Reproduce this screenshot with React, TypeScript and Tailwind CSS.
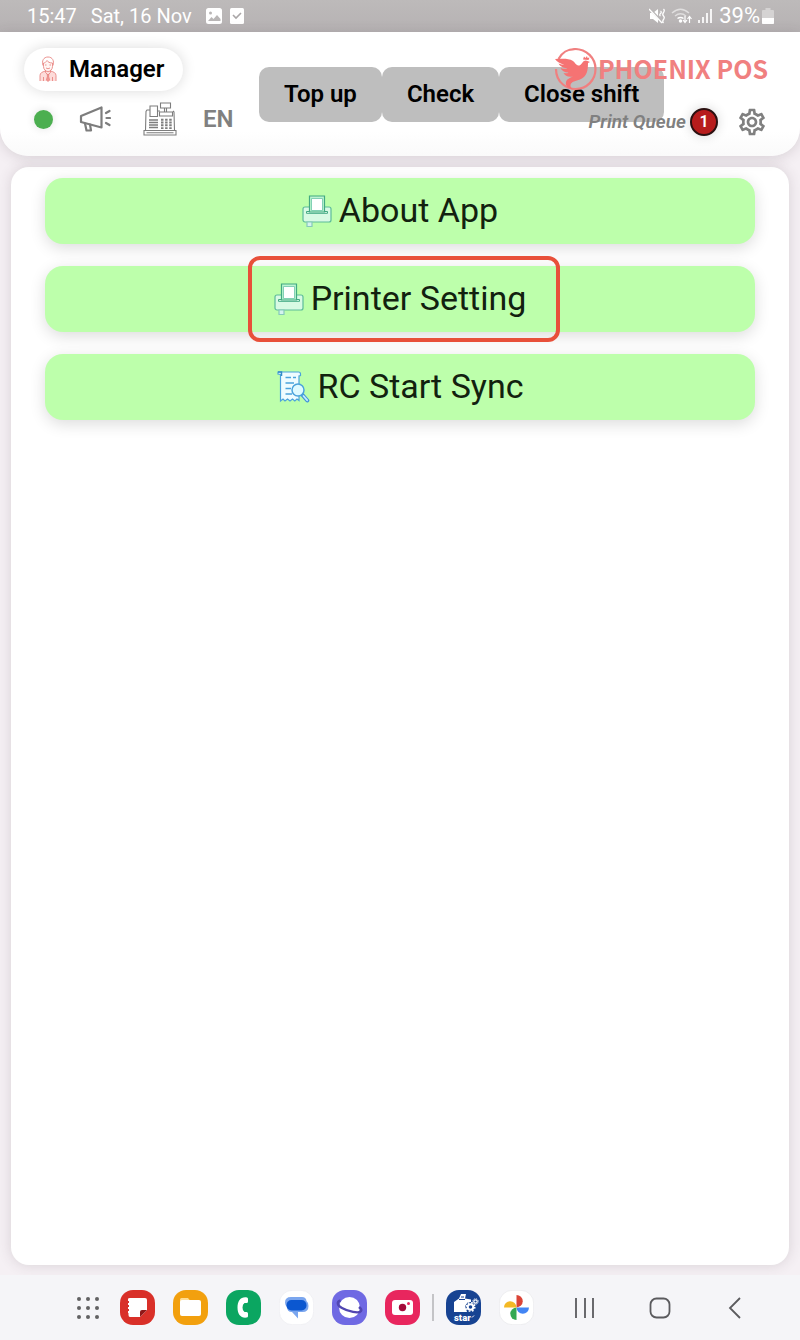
import React from 'react';

interface MenuItem {
  id: string;
  label: string;
  icon: React.ReactNode;
  highlighted?: boolean;
}

const PrinterIcon: React.FC = () => (
  <svg width="30" height="34" viewBox="0 0 30 34" fill="none" className="shrink-0">
    <rect x="1" y="13" width="28" height="15" rx="2" fill="#d8fae4" stroke="#5cbb9a" strokeWidth="1.2" />
    <path d="M4.500 17.500h21v1.800h-21z" fill="#e9fff0" stroke="#42a982" />
    <path d="M7.500 18V2h15v16z" fill="#bdf5d0" stroke="#42a982" strokeWidth="1.2" />
    <path d="M9.500 16.500v-12h11v12z" fill="#fff" stroke="#6cc5a8" strokeWidth=".8" />
    <path d="M5 28h5v4.500H5z" fill="#d5f3ee" stroke="#86c9bb" strokeWidth="1.2" />
  </svg>
);

const ReceiptSearchIcon: React.FC = () => (
  <svg width="34" height="34" viewBox="0 0 34 34" fill="none" className="shrink-0">
    <path d="M4.500 31V4.500L2 4V2h20.500c1.200 0 2 1 2 2v1.500L23 6v24.500l-2-1.500-2.200 2-2.300-2-2.500 2-2.500-2-2.500 2-2-2z" fill="#effcff" stroke="#4ba3dc" strokeWidth="1.200" />
    <path d="M2 2h3.500v4" stroke="#338bc6" strokeWidth="1.500" />
    <path d="M9.500 7.500H15M17 7.500h3M9.500 13H18M9.500 18.500H15M9.500 24H16" stroke="#4ba3dc" strokeWidth="1.400" />
    <path d="M26.500 25l4.800 5.500" stroke="#4294d9" strokeWidth="4" strokeLinecap="round" />
    <path d="M27.500 26l3.600 4.200" stroke="#c4edff" strokeWidth="1.800" strokeLinecap="round" />
    <circle cx="22" cy="20" r="6" fill="#dffaff" stroke="#4ba3dc" strokeWidth="1.500" />
  </svg>
);

const ManagerIcon: React.FC = () => (
  <svg width="18" height="26" viewBox="0 0 18 26" fill="none" stroke="#e98783" strokeWidth=".9">
    <path d="M1 25v-5.500c0-2.500 2-3.500 5.500-4.500h5c3.500 1 5.500 2 5.500 4.500V25" fill="#fddcda" />
    <path d="M4 9.500C2.500 5 4.500 1 9 1s6.500 4 5 8.500" />
    <path d="M4.500 7v3.500c0 3 2.500 5 4.500 5s4.500-2 4.500-5V7c-3 0-4.500-1-5.500-2.500C7 6 6 7 4.500 7z" fill="#fff5f3" />
    <path d="M7 12q2 1.500 4 0M6 9h1.500M10.500 9H12M6.500 14.500v2L9 19l2.500-2.500v-2M4.500 21v4M13.500 21v4" />
    <path d="M8 18.500h2L9.500 20l1 4L9 25.500 7.500 24l1-4z" fill="#f29a96" />
  </svg>
);

const MegaphoneIcon: React.FC = () => (
  <svg width="32" height="26" viewBox="0 0 32 26" fill="none" stroke="#7d7d7d" strokeWidth="2.200" strokeLinejoin="round" strokeLinecap="round">
    <path d="M2 10L22.500 1.500v20L2 16z" />
    <path d="M6 17.500l1.500 7H12l-1-6M27 7l3.500-2M27.500 12h3.500M27 17l3.500 2" />
  </svg>
);

const RegisterIcon: React.FC = () => (
  <svg width="34" height="34" viewBox="0 0 34 34" fill="none" stroke="#7d7d7d" strokeWidth="1.100">
    <path d="M1 28.500h32V33H1zM2.500 28.500L3 9.500l1-1.500h3M14 9h3M30 9l1 1 .5 18.500" />
    <path d="M7 14.500V4h7.500v10.500zM17.500 1h10v5h-10zM21.500 6v3.500M23.500 6v3.500M16.500 10h13v4h-13zM3.500 30.700h27" />
    <path d="M6 18h9M6 20.500h9M6 23h9M6 25.500h9" strokeWidth="1.300" />
    <path d="M18 17.700h12M18 20.500h12M18 23.300h12M18 26.100h12" strokeWidth="1.900" strokeDasharray="2.500 1.600" />
  </svg>
);

const GearIcon: React.FC = () => (
  <svg width="32" height="32" viewBox="0 0 24 24" fill="#808080">
    <path d="M19.430 12.980c.040-.320.070-.640.070-.980s-.030-.660-.070-.980l2.110-1.650c.190-.150.240-.420.120-.640l-2-3.460c-.090-.160-.260-.250-.440-.250-.060 0-.120.010-.170.030l-2.490 1c-.520-.400-1.080-.730-1.690-.980l-.380-2.650C14.460 2.180 14.250 2 14 2h-4c-.250 0-.460.180-.490.420l-.380 2.650c-.610.250-1.170.590-1.690.980l-2.490-1c-.060-.020-.120-.030-.180-.030-.170 0-.340.090-.430.250l-2 3.460c-.130.220-.070.490.120.640l2.110 1.650c-.040.320-.070.650-.070.980s.030.660.070.980l-2.110 1.650c-.190.150-.240.420-.120.640l2 3.460c.090.160.260.250.440.250.060 0 .120-.010.170-.030l2.490-1c.520.400 1.080.730 1.690.980l.380 2.650c.030.240.240.420.490.420h4c.250 0 .460-.180.490-.420l.380-2.650c.610-.250 1.170-.590 1.690-.980l2.490 1c.060.020.120.030.180.030.170 0 .340-.090.430-.250l2-3.460c.120-.220.070-.490-.120-.640l-2.110-1.650zm-1.980-1.710c.040.310.050.520.050.730s-.020.430-.050.730l-.140 1.130.890.700 1.080.840-.700 1.210-1.270-.510-1.040-.420-.900.680c-.430.320-.840.560-1.250.730l-1.060.430-.160 1.130-.200 1.350h-1.400l-.190-1.350-.160-1.130-1.060-.430c-.430-.180-.830-.410-1.230-.710l-.910-.700-1.060.430-1.270.510-.700-1.210 1.080-.840.890-.700-.140-1.130c-.030-.310-.050-.540-.050-.740s.020-.430.050-.730l.140-1.130-.890-.700-1.080-.840.700-1.210 1.270.510 1.040.420.900-.680c.430-.320.840-.560 1.250-.730l1.060-.430.160-1.130.200-1.350h1.390l.190 1.350.160 1.130 1.060.430c.430.180.830.410 1.230.710l.910.700 1.060-.430 1.270-.510.700 1.210-1.070.850-.890.700.140 1.130zM12 8c-2.210 0-4 1.790-4 4s1.790 4 4 4 4-1.790 4-4-1.790-4-4-4zm0 6c-1.100 0-2-.900-2-2s.900-2 2-2 2 .900 2 2-.900 2-2 2z" />
  </svg>
);

const PhoenixLogo: React.FC = () => (
  <svg width="44" height="44" viewBox="0 0 44 44" fill="none">
    <path d="M4.500 12C8 5.500 14 2 21 2c11.500 0 20.500 9 20.500 20S33 42 21.500 42c-5 0-9-1.500-12.500-4.500C4 33.500 2 28 2 22" stroke="#f08080" strokeWidth="2.200" />
    <path d="M12 4l9-3 9 2.500-8-.5z" fill="#f08080" />
    <path d="M1 12c7 0 13-1 18 2 2 1.500 3 4 5 4.500 3 .5 4-3 6-4.500 1-.8 2.500-.8 3.500 0l2.500 1-2 1c0 7-1 14-8 16.500-4 1.500-9 2-9.500 5.500-.3 2 1 3.500 3.500 4.500-6-.5-9-4-8-7.500.8-3 4-4 7-5.500-5 1-8-1-9.500-3.500 2 .5 4 .5 5-.5-4 0-7-2-8-4.500 3 1 5 1 7 .5C8 20.500 6 19 4.500 16.500c2 .8 4 1.200 6 1.200C6 16.500 3 15 1 12z" fill="#f57373" />
    <path d="M29 12.500l1-3 1.500 1.500 1.500-2 .5 2 2-.5-1 2.500z" fill="#f57373" />
  </svg>
);

const menuItems: MenuItem[] = [
  { id: 'about', label: 'About App', icon: <PrinterIcon /> },
  { id: 'printer', label: 'Printer Setting', icon: <PrinterIcon />, highlighted: true },
  { id: 'sync', label: 'RC Start Sync', icon: <ReceiptSearchIcon /> },
];

const shiftActions = ['Top up', 'Check', 'Close shift'];

const StatusBar: React.FC = () => (
  <div className="flex h-8 items-center justify-between bg-linear-to-b from-[#bdbaba] to-[#b6b2b3] pl-[27px] pr-[26px] text-xl leading-8 text-white">
    <div className="flex items-center">
      <span className="mr-3.5">15:47</span>
      <span className="mr-3.5">Sat, 16 Nov</span>
      <svg width="16" height="16" viewBox="0 0 16 16" className="mr-2">
        <rect width="16" height="16" rx="2.500" fill="#fff" />
        <circle cx="4.500" cy="5" r="1.500" fill="#b9b6b6" />
        <path d="M2 13l3.500-4 2 2L11 7l3.500 4v2z" fill="#b9b6b6" />
      </svg>
      <svg width="14" height="16" viewBox="0 0 14 16">
        <rect width="14" height="16" rx="1.500" fill="#fff" />
        <path d="M3 7l3 3 5-5" stroke="#aaa6a7" strokeWidth="1.600" fill="none" />
      </svg>
    </div>
    <div className="flex items-center">
      <svg width="16" height="16" viewBox="0 0 16 16" className="mr-1.5">
        <path d="M1 5h3l5-4v14l-5-4H1z" fill="#fff" />
        <path d="M1 1l13 14" stroke="#b9b6b6" strokeWidth="2.500" />
        <path d="M0 1l13 14M11.500 3q1.500 1 0 2.500t0 2.500M14.500 1q1.500 1.500 0 3.500t0 3.500 0 3.500 0 3.500" stroke="#fff" strokeWidth="1.300" fill="none" />
      </svg>
      <svg width="22" height="16" viewBox="0 0 22 16" fill="none" stroke="#fff" strokeWidth="1.500" className="mr-1">
        <path d="M1 5q8.500-7.500 17 0M4 8q5.500-4.500 11 0" opacity=".55" />
        <path d="M6.500 10.500q3-2 6 0" />
        <circle cx="9.500" cy="13" r="1" fill="#fff" />
        <path d="M14 8v6M12 12l2 2.500 2-2.500M18.500 15V8.500M16.500 11l2-2.500 2 2.500" strokeWidth="1.200" />
      </svg>
      <svg width="16" height="16" viewBox="0 0 16 16" stroke="#fff" strokeWidth="1.700" className="mr-1.5">
        <path d="M2 12v3M6 9v6M10 5v10M14 1v14" />
      </svg>
      <span className="mr-0.5 text-[22px]">39%</span>
      <svg width="12" height="16" viewBox="0 0 12 16">
        <path d="M3.500 0h5v2H11q1 0 1 1v12q0 1-1 1H1q-1 0-1-1V3q0-1 1-1h2.500z" fill="#d5d3d3" />
        <path d="M0 10h12v5q0 1-1 1H1q-1 0-1-1z" fill="#fff" />
      </svg>
    </div>
  </div>
);

const Header: React.FC = () => (
  <header className="relative flex h-[124px] rounded-b-[28px] bg-linear-to-b from-white from-80% to-[#fafafa] pl-6 shadow-[0_2px_14px_rgba(70,50,60,0.16)]">
    <div className="w-[235px] pt-4">
      <button className="flex h-[43px] w-[159px] items-center gap-3 rounded-full bg-white pb-0.5 pl-[15px] text-2xl font-semibold text-black shadow-[0_0_14px_rgba(0,0,0,0.14)]">
        <ManagerIcon />
        Manager
      </button>
      <div className="mt-2.5 flex h-9 items-center pl-2.5">
        <span className="mr-[26px] size-[19px] rounded-full bg-[#4caf50] shadow-[0_0_10px_rgba(0,0,0,0.12)]" />
        <button aria-label="Announcements" className="mr-8">
          <MegaphoneIcon />
        </button>
        <button aria-label="Cash register" className="mr-[26px]">
          <RegisterIcon />
        </button>
        <button className="text-2xl font-semibold text-[#808080]">EN</button>
      </div>
    </div>
    <div className="mt-[35px] flex h-[55px]">
      {shiftActions.map(action => (
        <button key={action} className="rounded-[10px] bg-[#bebebe] px-[25px] pb-0.5 text-2xl font-semibold text-black">
          {action}
        </button>
      ))}
    </div>
    {/* Branding and print queue float above the action buttons */}
    <div className="absolute right-8 top-[15px] flex flex-col items-end">
      <div className="flex h-11 items-center">
        <PhoenixLogo />
        <span className="whitespace-nowrap pb-0.5 font-['Noto_Sans_CJK_SC','Open_Sans',sans-serif] text-[25px] font-bold leading-10 text-[#f08080]">PHOENIX POS</span>
      </div>
      <div className="mt-[15px] flex h-8 items-center">
        <span className="text-[19px] font-semibold italic text-[#808080]">Print Queue</span>
        <span className="ml-1 mr-[18px] flex size-7 items-center justify-center rounded-full border-2 border-[#2b1010] bg-[#b71c1c] text-base font-semibold text-white shadow-[0_0_12px_rgba(0,0,0,0.16)]">1</span>
        <button aria-label="Settings">
          <GearIcon />
        </button>
      </div>
    </div>
  </header>
);

const appIcon = 'size-[35px] shrink-0';

const Taskbar: React.FC = () => (
  <nav className="flex h-[65px] items-center justify-end bg-[#f5f5f8] pr-7">
    <button aria-label="All apps" className="mr-[18px]">
      <svg width="28" height="28" viewBox="0 0 28 28" fill="#616163">
        {[5, 14, 23].map(y => [5, 14, 23].map(x => <circle key={`${x}-${y}`} cx={x} cy={y} r="2" />))}
      </svg>
    </button>
    <div className="flex gap-[18px]">
      <button aria-label="Notes" className={appIcon}>
        <svg viewBox="0 0 35 35">
          <rect width="35" height="35" rx="13" fill="#d93029" />
          <path d="M10 8h15q2 0 2 2v10l-7 7H10q-1.500 0-1.500-2v-2H8v-2h1v-2H8v-2h1v-2H8v-2h1v-2H8V9q0-1 2-1z" fill="#fff" />
          <path d="M20 27v-5q0-2 2-2h5z" fill="#8f1718" />
        </svg>
      </button>
      <button aria-label="My Files" className={appIcon}>
        <svg viewBox="0 0 35 35">
          <rect width="35" height="35" rx="13" fill="#f2a00e" />
          <path d="M7 13V9.500Q7 8 8.500 8H15l2 2.500z" fill="#ffdc93" />
          <rect x="7" y="10" width="21" height="16" rx="2" fill="#fff" />
        </svg>
      </button>
      <button aria-label="Phone" className={appIcon}>
        <svg viewBox="0 0 35 35">
          <rect width="35" height="35" rx="13" fill="#0ba661" />
          <path d="M21 7.500c-6-1-9.500 3-9.500 10s3.500 11 9.500 10q1-.3 1-1.500v-2.500q0-1.500-1.500-1.500h-2q-2-1-2-4.500t2-4.500h2q1.500 0 1.500-1.500V9q0-1.200-1-1.500z" fill="#fff" />
        </svg>
      </button>
      <button aria-label="Messages" className={appIcon}>
        <svg viewBox="0 0 35 35">
          <rect x=".3" y=".3" width="34.400" height="34.400" rx="13" fill="#fff" stroke="#e9e9ee" strokeWidth=".6" />
          <path d="M12 7h11q4 0 4.500 4 2 1.500 2 5 0 6-6 6H19v6.500L13 22q-5 0-5-5-2-1.500-2-4.500Q6 7 12 7z" fill="#7ba6ee" />
          <rect x="7.500" y="10" width="20" height="10.500" rx="5" fill="#0b57d0" />
        </svg>
      </button>
      <button aria-label="Internet" className={appIcon}>
        <svg viewBox="0 0 35 35">
          <rect width="35" height="35" rx="13" fill="#6f69e3" />
          <circle cx="17.500" cy="17.500" r="10.500" fill="#fff" />
          <path d="M8.500 10.500c-4 1-3.500 5 1.500 7.500 6 3.500 17 6 19 3 .8-1-.2-2.500-2-4" fill="none" stroke="#5146b1" strokeWidth="2.400" />
        </svg>
      </button>
      <button aria-label="Camera" className={appIcon}>
        <svg viewBox="0 0 35 35">
          <rect width="35" height="35" rx="13" fill="#e8265e" />
          <rect x="7" y="10" width="21" height="15" rx="3" fill="#fff" />
          <circle cx="17.500" cy="17.500" r="3.700" fill="#a40b3a" />
          <circle cx="23.500" cy="13.500" r="1.500" fill="#e8265e" />
        </svg>
      </button>
    </div>
    <span className="mx-3 h-[27px] w-0.5 bg-[#c4c4c7]" />
    <div className="flex gap-[18px]">
      <button aria-label="Star printer utility" className={appIcon}>
        <svg viewBox="0 0 35 35">
          <rect width="35" height="35" rx="13" fill="#174392" />
          <path d="M8 12l5-3.500L15 4h5l-1 4.500 6 1V22H8z" fill="#fff" />
          <path d="M13 9.500h6M15 7h3" stroke="#174392" />
          <path d="M19 16l3-4h6v10h-7z" fill="#174392" />
          <g fill="none" stroke="#fff">
            <circle cx="24.500" cy="17" r="2.800" strokeWidth="2" />
            <circle cx="24.500" cy="17" r="4.300" strokeWidth="1.500" strokeDasharray="1.700 1.680" />
            <circle cx="29.500" cy="11.500" r="1.700" strokeWidth="1.200" />
            <circle cx="29.500" cy="11.500" r="2.800" strokeDasharray="1 1.200" />
          </g>
          <text x="8" y="31" fill="#fff" fontFamily="Roboto, sans-serif" fontWeight="900" fontSize="9.500">star</text>
          <path d="M26 27.500l2-2" stroke="#fff" />
        </svg>
      </button>
      <button aria-label="Photos" className={appIcon}>
        <svg viewBox="0 0 35 35">
          <rect x=".3" y=".3" width="34.400" height="34.400" rx="13" fill="#fff" stroke="#e4e4e8" strokeWidth=".6" />
          <path d="M17.500 5a6.200 6.200 0 0 1 0 12.400z" fill="#db4437" />
          <path d="M30 17.500a6.200 6.200 0 0 1-12.400 0z" fill="#4285f4" />
          <path d="M17.500 30a6.200 6.200 0 0 1 0-12.400z" fill="#34a853" />
          <path d="M5 17.400a6.200 6.200 0 0 1 12.400 0z" fill="#f4b925" />
        </svg>
      </button>
    </div>
    <div className="ml-[13px] flex">
      <button aria-label="Recents" className="flex w-[75px] justify-center">
        <svg width="24" height="24" viewBox="0 0 24 24" stroke="#5b5b5e" strokeWidth="1.800">
          <path d="M3 2v20M12 2v20M20 2v20" />
        </svg>
      </button>
      <button aria-label="Home" className="flex w-[75px] justify-center">
        <svg width="24" height="24" viewBox="0 0 24 24" fill="none" stroke="#5b5b5e" strokeWidth="1.800">
          <rect x="2.500" y="2.500" width="19" height="19" rx="6" />
        </svg>
      </button>
      <button aria-label="Back" className="flex w-[75px] justify-center">
        <svg width="24" height="24" viewBox="0 0 24 24" fill="none" stroke="#5b5b5e" strokeWidth="1.800">
          <path d="M17 2L7 12l10 10" />
        </svg>
      </button>
    </div>
  </nav>
);

const App: React.FC = () => {
  return (
    <div className="flex min-h-screen flex-col bg-[#f5f0f4] font-['Roboto',sans-serif]">
      <StatusBar />
      <Header />
      <main className="mx-[11px] mb-2.5 mt-[11px] flex flex-1 flex-col gap-[22px] rounded-[18px] bg-white px-[34px] pt-[11px] shadow-[0_0_14px_rgba(70,50,60,0.16)]">
        {menuItems.map(item => (
          <button
            key={item.id}
            className="flex h-[66px] w-full justify-center rounded-[18px] bg-[#bdffab] text-[34px] leading-10 text-[#12210f] shadow-[0_4px_16px_rgba(0,0,0,0.14)]"
          >
            <span className="relative flex h-full items-center gap-[7px]">
              {item.icon}
              <span className="pb-[3px]">{item.label}</span>
              {item.highlighted && (
                <span className="absolute -inset-y-2.5 -left-[26px] -right-[34px] rounded-xl border-4 border-[#e8503a]" />
              )}
            </span>
          </button>
        ))}
      </main>
      <Taskbar />
    </div>
  );
};

export default App;
